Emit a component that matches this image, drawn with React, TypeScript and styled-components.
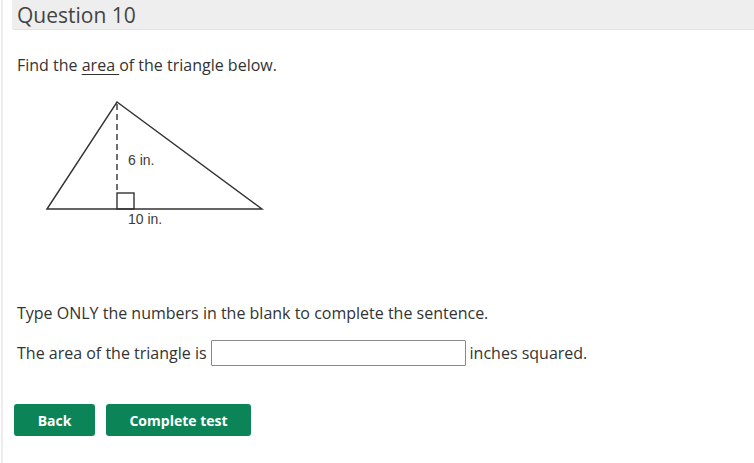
import React from "react";
import styled, { createGlobalStyle } from "styled-components";

const GlobalStyle = createGlobalStyle`
  body {
    margin: 0;
    background: #ffffff;
    font-family: "Open Sans", "Liberation Sans", sans-serif;
    color: #333333;
  }
`;

const Page = styled.div`
  min-height: 463px;
  margin-left: 1px;
  border-left: 2px solid #ececec;
  box-sizing: border-box;
`;

const Header = styled.div`
  margin-left: 9px;
  height: 29px;
  padding-left: 5px;
  display: flex;
  align-items: center;
  background: #eeeeee;
  border-bottom: 1px solid #e2e2e2;
  border-bottom-left-radius: 3px;
  font-size: 21px;
  color: #444444;
`;

const Body = styled.div`
  padding-left: 14px;
`;

const Prompt = styled.p`
  margin: 24px 0 0;
  font-size: 16px;
  line-height: 22px;
  u {
    text-decoration-thickness: 1px;
    text-underline-offset: 3px;
  }
`;

const Figure = styled.div`
  margin: 19px 0 0 23px;
  width: 230px;
  height: 135px;
  svg {
    display: block;
  }
`;

const Instruction = styled.p`
  margin: 72px 0 0;
  font-size: 16px;
  line-height: 22px;
`;

const AnswerRow = styled.div`
  margin-top: 16px;
  display: flex;
  align-items: center;
  font-size: 16px;
  line-height: 22px;
`;

const Blank = styled.input`
  width: 255px;
  height: 26px;
  margin: 0 4px;
  box-sizing: border-box;
  border: 1px solid #8a8a8a;
  border-radius: 1px;
  padding: 0 4px;
  font: inherit;
`;

const Actions = styled.div`
  margin: 38px 0 0 -3px;
  display: flex;
  gap: 11px;
`;

const Button = styled.button<{ $wide?: boolean }>`
  width: ${(p) => (p.$wide ? "145px" : "81px")};
  height: 32px;
  border: none;
  border-radius: 3px;
  background: #0b8458;
  color: #ffffff;
  font-family: "Open Sans", "Liberation Sans", sans-serif;
  font-weight: 700;
  font-size: 14px;
  cursor: pointer;
`;

const Triangle = () => (
  <svg width="230" height="135" viewBox="0 0 230 135">
    <g stroke="#333" strokeWidth="1.4" fill="none">
      <polygon points="7,114 77,7 222,114" strokeLinejoin="miter" />
      <line x1="77" y1="9" x2="77" y2="98" strokeDasharray="6 4" />
      <rect x="77" y="98" width="17" height="16" />
    </g>
    <g fill="#3d3a38" fontFamily="'Liberation Sans', Arial, sans-serif" fontSize="14">
      <text x="88" y="70">6 in.</text>
      <text x="88" y="129">10 in.</text>
    </g>
  </svg>
);

const App = () => {
  return (
    <Page>
      <GlobalStyle />
      <Header>Question 10</Header>
      <Body>
        <Prompt>
          Find the <u>area </u>of the triangle below.
        </Prompt>
        <Figure>
          <Triangle />
        </Figure>
        <Instruction>Type ONLY the numbers in the blank to complete the sentence.</Instruction>
        <AnswerRow>
          <span>The area of the triangle is</span>
          <Blank type="text" />
          <span>inches squared.</span>
        </AnswerRow>
        <Actions>
          <Button>Back</Button>
          <Button $wide>Complete test</Button>
        </Actions>
      </Body>
    </Page>
  );
};

export default App;
